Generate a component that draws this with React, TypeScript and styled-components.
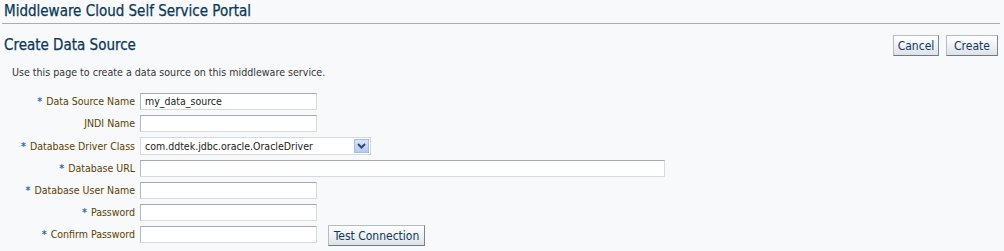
import React from "react";
import styled, { createGlobalStyle } from "styled-components";

const FONT = `"DejaVu Sans Condensed", "DejaVu Sans", "Liberation Sans", sans-serif`;

const Global = createGlobalStyle`
  html, body { margin: 0; padding: 0; background: #f8f9fb; }
  body { font-family: ${FONT}; }
`;

const Page = styled.div`
  width: 1004px;
  height: 251px;
  overflow: hidden;
  background: #f8f9fb;
`;

const Brand = styled.div`
  margin: 0 4px 0 2px;
  padding: 3px 0 3px 2px;
  height: 17px;
  font-size: 15px;
  line-height: 17px;
  color: #0b3856;
  -webkit-text-stroke: 0.25px #0b3856;
  border-bottom: 1px solid #a6adb5;
`;

const TitleRow = styled.div`
  display: flex;
  align-items: center;
  justify-content: space-between;
  padding: 11px 6px 0 4px;
`;

const Title = styled.h1`
  margin: 0;
  font-size: 15px;
  font-weight: normal;
  line-height: 21px;
  color: #0b3856;
  -webkit-text-stroke: 0.25px #0b3856;
`;

const ButtonGroup = styled.div`
  display: flex;
  gap: 7px;
`;

const Button = styled.button<{ $w: number }>`
  width: ${(p) => p.$w}px;
  height: 21px;
  padding: 0;
  font-family: ${FONT};
  font-size: 12px;
  color: #0d3a58;
  background: linear-gradient(#ffffff, #f1f3f7 45%, #dde2ea);
  border: 1px solid #b5bcc6;
  border-right-color: #7c8591;
  border-bottom-color: #6f7884;
  border-radius: 0;
`;

const Instructions = styled.p`
  margin: 9px 0 0 12px;
  font-size: 10.6px;
  line-height: 14px;
  color: #333333;
`;

const Form = styled.div`
  display: grid;
  grid-template-columns: 135px auto;
  column-gap: 5px;
  row-gap: 5px;
  margin-top: 14px;
  align-items: center;
`;

const Label = styled.label`
  text-align: right;
  font-size: 10.5px;
  line-height: 17px;
  color: #5b4300;
  white-space: nowrap;
`;

const Req = styled.span`
  color: #3b6aa8;
  font-weight: bold;
  margin-right: 4px;
`;

const Field = styled.div<{ $h?: number }>`
  display: flex;
  align-items: center;
  gap: 11px;
  height: ${(p) => p.$h ?? 17}px;
`;

const Input = styled.div<{ $w: number }>`
  box-sizing: border-box;
  width: ${(p) => p.$w}px;
  height: 17px;
  padding: 0 4px;
  font-size: 10.5px;
  line-height: 15px;
  color: #222;
  background: #fff;
  border: 1px solid #d5dade;
  border-top-color: #a3a9b1;
  border-left-color: #b3b9c0;
`;

const Select = styled.div`
  box-sizing: border-box;
  width: 231px;
  height: 18px;
  display: flex;
  align-items: center;
  justify-content: space-between;
  padding: 0 1px 0 4px;
  font-size: 10.5px;
  color: #222;
  background: #fff;
  border: 1px solid #d5dade;
`;

const DropButton = styled.span`
  display: flex;
  align-items: center;
  justify-content: center;
  width: 15px;
  height: 14px;
  background: linear-gradient(#d9e4fb, #b7c9f0);
  border: 1px solid #a8bbe2;
  box-sizing: border-box;
`;

const TestButton = styled(Button)`
  margin-top: 2px;
`;

const rows: { label: string; req: boolean; value?: string; w: number }[] = [
  { label: "Data Source Name", req: true, value: "my_data_source", w: 177 },
  { label: "JNDI Name", req: false, w: 177 },
];

export default function App() {
  return (
    <Page>
      <Global />
      <Brand>Middleware Cloud Self Service Portal</Brand>
      <TitleRow>
        <Title>Create Data Source</Title>
        <ButtonGroup>
          <Button $w={46}>Cancel</Button>
          <Button $w={52}>Create</Button>
        </ButtonGroup>
      </TitleRow>
      <Instructions>Use this page to create a data source on this middleware service.</Instructions>
      <Form>
        {rows.map((r) => (
          <React.Fragment key={r.label}>
            <Label>
              {r.req && <Req>*</Req>}
              {r.label}
            </Label>
            <Field>
              <Input $w={r.w}>{r.value}</Input>
            </Field>
          </React.Fragment>
        ))}
        <Label>
          <Req>*</Req>Database Driver Class
        </Label>
        <Field $h={18}>
          <Select>
            com.ddtek.jdbc.oracle.OracleDriver
            <DropButton>
              <svg width="9" height="6" viewBox="0 0 9 6">
                <path d="M1 1 L4.5 4.5 L8 1" fill="none" stroke="#3a4868" strokeWidth="2" />
              </svg>
            </DropButton>
          </Select>
        </Field>
        <Label>
          <Req>*</Req>Database URL
        </Label>
        <Field>
          <Input $w={525} />
        </Field>
        <Label>
          <Req>*</Req>Database User Name
        </Label>
        <Field>
          <Input $w={177} />
        </Field>
        <Label>
          <Req>*</Req>Password
        </Label>
        <Field>
          <Input $w={177} />
        </Field>
        <Label>
          <Req>*</Req>Confirm Password
        </Label>
        <Field>
          <Input $w={177} />
          <TestButton $w={97}>Test Connection</TestButton>
        </Field>
      </Form>
    </Page>
  );
}
